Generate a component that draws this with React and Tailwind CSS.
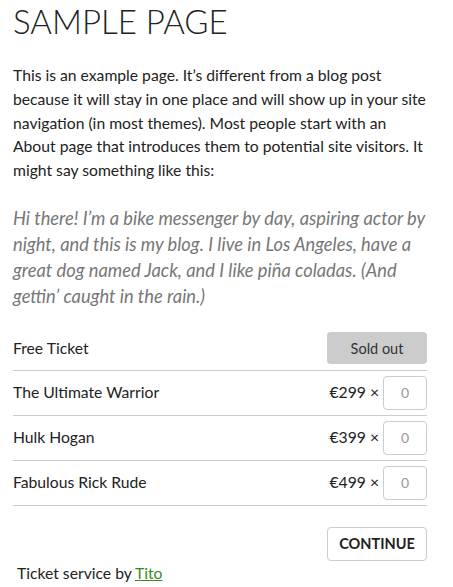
import React from "react";

const tickets = [
  { name: "The Ultimate Warrior", price: "€299" },
  { name: "Hulk Hogan", price: "€399" },
  { name: "Fabulous Rick Rude", price: "€499" },
];

const App = () => {
  return (
    <div className="min-h-[587px] bg-white pl-[13px] pr-[13px] font-['Lato',sans-serif] text-[#222]">
      {/* Titel */}
      <h1 className="pt-[2px] text-[33px] font-light leading-[38px] text-[#222]">
        SAMPLE PAGE
      </h1>

      <p className="mt-[24px] w-[414px] text-[15.7px] leading-[23.8px] text-[#222]">
        This is an example page. It’s different from a blog post because it
        will stay in one place and will show up in your site navigation (in
        most themes). Most people start with an About page that introduces
        them to potential site visitors. It might say something like this:
      </p>

      <blockquote className="mt-[22px] w-[420px] text-[18.3px] italic leading-[26px] text-[#777]">
        Hi there! I’m a bike messenger by day, aspiring actor by night, and
        this is my blog. I live in Los Angeles, have a great dog named Jack,
        and I like piña coladas. (And gettin’ caught in the rain.)
      </blockquote>

      {/* Tickets */}
      <div className="mt-[18px] w-[414px] text-[15.7px]">
        <div className="flex h-[44px] items-center justify-between border-b border-[#ccc]">
          <span>Free Ticket</span>
          <span className="flex h-[32px] w-[100px] items-center justify-center rounded-[4px] bg-[#ccc] text-[14.5px] text-[#333]">
            Sold out
          </span>
        </div>
        {tickets.map((t) => (
          <div
            key={t.name}
            className="flex h-[45px] items-center justify-between border-b border-[#ccc]"
          >
            <span>{t.name}</span>
            <div className="flex items-center gap-[4px]">
              <span>{t.price} ×</span>
              <span className="flex h-[34px] w-[44px] items-center justify-center rounded-[4px] border border-[#ccc] text-[14px] text-[#999]">
                0
              </span>
            </div>
          </div>
        ))}
        <div className="mt-[21px] flex justify-end">
          <button className="h-[34px] w-[100px] rounded-[4px] border border-[#ccc] bg-white text-[14.5px] font-bold text-[#222]">
            CONTINUE
          </button>
        </div>
        <p className="mt-[1px] pl-[4px] text-[15.7px] leading-[22px]">
          Ticket service by{" "}
          <a href="#" className="text-[#3a8a1e] underline">
            Tito
          </a>
        </p>
      </div>
    </div>
  );
};

export default App;
